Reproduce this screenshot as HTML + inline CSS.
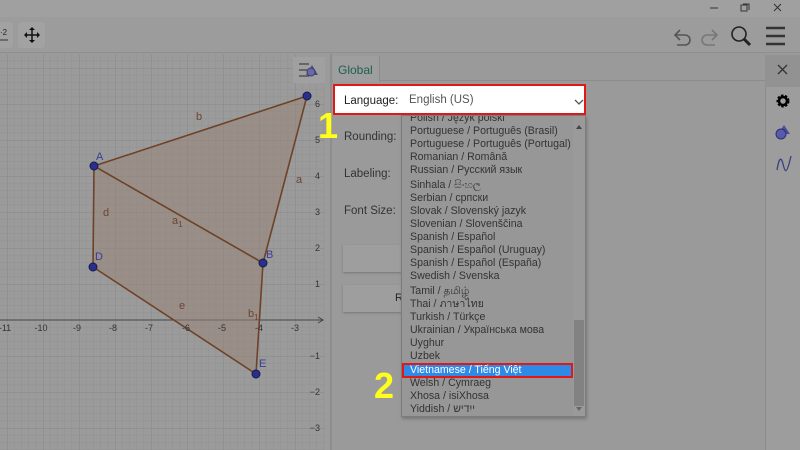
<!DOCTYPE html>
<html><head><meta charset="utf-8"><style>
*{margin:0;padding:0;box-sizing:border-box}
body{width:800px;height:450px;overflow:hidden;background:#9a9a9a;font-family:"Liberation Sans","Noto Sans CJK SC",sans-serif;position:relative}
.abs{position:absolute}
.item{position:absolute;left:8px;font-size:10.6px;color:#333;white-space:nowrap;line-height:13px}
.lbl{position:absolute;left:11px;font-size:11.5px;color:#333}
</style></head><body>
<div class="abs" style="left:0;top:0;width:800px;height:17px;background:#a0a0a0"></div>
<div class="abs" style="left:0;top:17px;width:800px;height:36px;background:#9c9c9c;border-bottom:1px solid #8f8f8f"></div>
<svg class="abs" style="left:0;top:0" width="800" height="55">
 <line x1="710" y1="8" x2="718" y2="8" stroke="#333" stroke-width="1"/>
 <rect x="741" y="5" width="6" height="6" fill="none" stroke="#333"/><path d="M743 4h6v6" fill="none" stroke="#333"/>
 <path d="M774 4l7 7M781 4l-7 7" stroke="#333" stroke-width="1"/>
 <rect x="-5" y="22" width="18" height="26" rx="3" fill="#a2a2a2"/>
 <text x="0" y="35" font-size="8" fill="#222">·2</text><line x1="0" y1="40" x2="8" y2="40" stroke="#333"/>
 <rect x="18" y="22" width="27" height="26" rx="3" fill="#a2a2a2"/>
 <path d="M32 28v14M25 35h14" stroke="#111" stroke-width="1.5"/>
 <path d="M32 27l-3 3h6zM32 43l-3-3h6zM24 35l3-3v6zM40 35l-3-3v6z" fill="#111"/>
 <path d="M680 30l-5 5 5 5M675 35h10a5 5 0 0 1 0 10h-8" fill="none" stroke="#555" stroke-width="1.6"/>
 <path d="M712 30l5 5-5 5M717 35h-10a5 5 0 0 0 0 10h8" fill="none" stroke="#777" stroke-width="1.6"/>
 <circle cx="739" cy="34" r="7" fill="none" stroke="#222" stroke-width="1.6"/><path d="M744 39l6 6" stroke="#222" stroke-width="3"/>
 <path d="M766 28h19M766 36h19M766 44h19" stroke="#333" stroke-width="2.4"/>
</svg>
<svg class="abs" style="left:0;top:54px" width="330" height="396">
 <defs>
  <pattern id="g" patternUnits="userSpaceOnUse" x="7" y="-22" width="36" height="36">
   <path d="M7.2 0v36M14.4 0v36M21.6 0v36M28.8 0v36M0 7.2h36M0 14.4h36M0 21.6h36M0 28.8h36" stroke="#939393" stroke-width="0.6"/>
   <path d="M0 0v36M0 0h36" stroke="#878787" stroke-width="1"/>
  </pattern>
 </defs>
 <rect width="330" height="396" fill="#9b9b9b"/>
 <rect width="325" height="396" fill="url(#g)"/>
 <g transform="translate(0,-54)">
 <line x1="0" y1="320" x2="323" y2="320" stroke="#444" stroke-width="1"/>
 <path d="M318 317l5 3-5 3" fill="none" stroke="#444"/>
 <polygon points="94,166 307,96 263,263 256,374 93,267" fill="#978478" opacity="0.55"/>
 <g stroke="#6e4226" stroke-width="1.6" fill="none">
  <path d="M94 166L307 96L263 263L256 374L93 267Z"/><path d="M94 166L263 263"/>
 </g>
 <g fill="#2a2f8a" stroke="#151a50" stroke-width="1"><circle cx="94" cy="166" r="4"/><circle cx="307" cy="96" r="4"/><circle cx="263" cy="263" r="4"/><circle cx="93" cy="267" r="4"/><circle cx="256" cy="374" r="4"/></g>
 <g font-size="11" fill="#3c3c9a"><text x="96" y="160">A</text><text x="266" y="258">B</text><text x="95" y="260">D</text><text x="259" y="367">E</text></g>
 <g font-size="11" fill="#6e4430"><text x="196" y="120">b</text><text x="296" y="183">a</text><text x="103" y="216">d</text><text x="172" y="224">a<tspan font-size="8" dy="3">1</tspan></text><text x="179" y="309">e</text><text x="248" y="317">b<tspan font-size="8" dy="3">1</tspan></text></g>
 <g font-size="9" fill="#333" text-anchor="middle"><text x="5" y="331">-11</text><text x="41" y="331">-10</text><text x="77" y="331">-9</text><text x="113" y="331">-8</text><text x="149" y="331">-7</text><text x="186" y="331">-6</text><text x="222" y="331">-5</text><text x="259" y="331">-4</text><text x="295" y="331">-3</text></g>
 <g font-size="9" fill="#333" text-anchor="end"><text x="320" y="107">6</text><text x="320" y="143">5</text><text x="320" y="179">4</text><text x="320" y="215">3</text><text x="320" y="251">2</text><text x="320" y="287">1</text><text x="320" y="359">−1</text><text x="320" y="395">−2</text><text x="320" y="431">−3</text></g>
 <rect x="293" y="57" width="32" height="26" fill="#a0a0a0"/>
 <path d="M299 64h10M299 70h8M299 76h10" stroke="#444" stroke-width="1.3"/>
 <path d="M312 65l6 10h-12z" fill="#4a4f7a"/><circle cx="311" cy="72" r="4" fill="#6a6aa0" stroke="#3a3a7a"/>
 </g>
</svg>
<div class="abs" style="left:330px;top:54px;width:2px;height:396px;background:#8e8e8e"></div>
<div class="abs" style="left:332px;top:55px;width:433px;height:395px;background:#9a9a9a"></div>
<div class="abs" style="left:332px;top:55px;width:433px;height:26px;border-bottom:1px solid #8c8c8c"></div>
<div class="abs" style="left:333px;top:56px;width:47px;height:26px;background:#9e9e9e;border-right:1px solid #8c8c8c;font-size:12px;color:#1f5f50;padding:7px 0 0 5px">Global</div>
<div class="abs" style="left:765px;top:55px;width:35px;height:395px;background:#9d9d9d;border-left:1px solid #8c8c8c"></div>
<div class="abs" style="left:765px;top:55px;width:35px;height:32px;background:#929292"></div>
<svg class="abs" style="left:765px;top:55px" width="35" height="130">
 <path d="M13 10l9 9M22 10l-9 9" stroke="#333" stroke-width="1.3"/>
 <circle cx="18" cy="46" r="5" fill="none" stroke="#000" stroke-width="3" stroke-dasharray="2.2 1.4"/><circle cx="18" cy="46" r="4" fill="none" stroke="#000" stroke-width="2.5"/>
 <path d="M19 70l6 9h-12z" fill="#4a4f9a"/><circle cx="16" cy="79" r="5" fill="#5a5aa8" stroke="#2a2f70"/>
 <path d="M12 115c2-12 4-14 6-6s3 10 6 0l2-8" fill="none" stroke="#3a3f80" stroke-width="1.3"/>
</svg>
<div class="lbl" style="left:344px;top:131px">Rounding:</div>
<div class="lbl" style="left:344px;top:168px">Labeling:</div>
<div class="lbl" style="left:344px;top:205px">Font Size:</div>
<div class="abs" style="left:343px;top:245px;width:60px;height:27px;background:#9e9e9e;box-shadow:0 1px 2px #777"></div>
<div class="abs" style="left:343px;top:285px;width:60px;height:27px;background:#9e9e9e;box-shadow:0 1px 2px #777;font-size:11px;color:#222;padding:7px 0 0 52px">R</div>
<div class="abs" style="left:333px;top:84px;width:253px;height:31px;background:#fff;border:2px solid #e01818"></div>
<div class="abs" style="left:344px;top:95px;font-size:11.5px;color:#222">Language:</div>
<div class="abs" style="left:409px;top:94px;font-size:11.5px;color:#555">English (US)</div>
<svg class="abs" style="left:574px;top:98px" width="10" height="8"><path d="M1 2l4 4 4-4" fill="none" stroke="#555" stroke-width="1.3"/></svg>
<div class="abs" style="left:401px;top:115px;width:185px;height:302px;background:#979797;border:1px solid #7c7c7c;box-shadow:1px 2px 3px #777;overflow:hidden">
 <div class="item" style="top:-4px">Polish / Język polski</div>
 <div class="item" style="top:9px">Portuguese / Português (Brasil)</div>
 <div class="item" style="top:22px">Portuguese / Português (Portugal)</div>
 <div class="item" style="top:35px">Romanian / Română</div>
 <div class="item" style="top:48px">Russian / Русский язык</div>
 <div class="item" style="top:63px">Sinhala / සිංහල</div>
 <div class="item" style="top:76px">Serbian / српски</div>
 <div class="item" style="top:89px">Slovak / Slovenský jazyk</div>
 <div class="item" style="top:102px">Slovenian / Slovenščina</div>
 <div class="item" style="top:115px">Spanish / Español</div>
 <div class="item" style="top:128px">Spanish / Español (Uruguay)</div>
 <div class="item" style="top:141px">Spanish / Español (España)</div>
 <div class="item" style="top:154px">Swedish / Svenska</div>
 <div class="item" style="top:169px">Tamil / தமிழ்</div>
 <div class="item" style="top:182px">Thai / ภาษาไทย</div>
 <div class="item" style="top:195px">Turkish / Türkçe</div>
 <div class="item" style="top:208px">Ukrainian / Українська мова</div>
 <div class="item" style="top:221px">Uyghur</div>
 <div class="item" style="top:234px">Uzbek</div>
 <div class="abs" style="left:0;top:247px;width:171px;height:15px;background:#2f8ae6;border:2px solid #e01818"></div>
 <div class="item" style="top:248px;color:#fff">Vietnamese / Tiếng Việt</div>
 <div class="item" style="top:261px">Welsh / Cymraeg</div>
 <div class="item" style="top:274px">Xhosa / isiXhosa</div>
 <div class="item" style="top:287px">Yiddish / ייִדיש</div>
 <div class="abs" style="left:171px;top:0;width:12px;height:300px;background:#9a9a9a"></div>
 <div class="abs" style="left:172px;top:204px;width:10px;height:86px;background:#828282"></div>
</div>
<svg class="abs" style="left:575px;top:124px" width="8" height="6"><path d="M1 5l3-4 3 4z" fill="#444"/></svg>
<svg class="abs" style="left:575px;top:406px" width="8" height="6"><path d="M1 1l3 4 3-4z" fill="#666"/></svg>
<div class="abs" style="left:318px;top:108px;font-size:36px;font-weight:bold;color:#ffff1a;line-height:1">1</div>
<div class="abs" style="left:374px;top:368px;font-size:36px;font-weight:bold;color:#ffff1a;line-height:1">2</div>
</body></html>
